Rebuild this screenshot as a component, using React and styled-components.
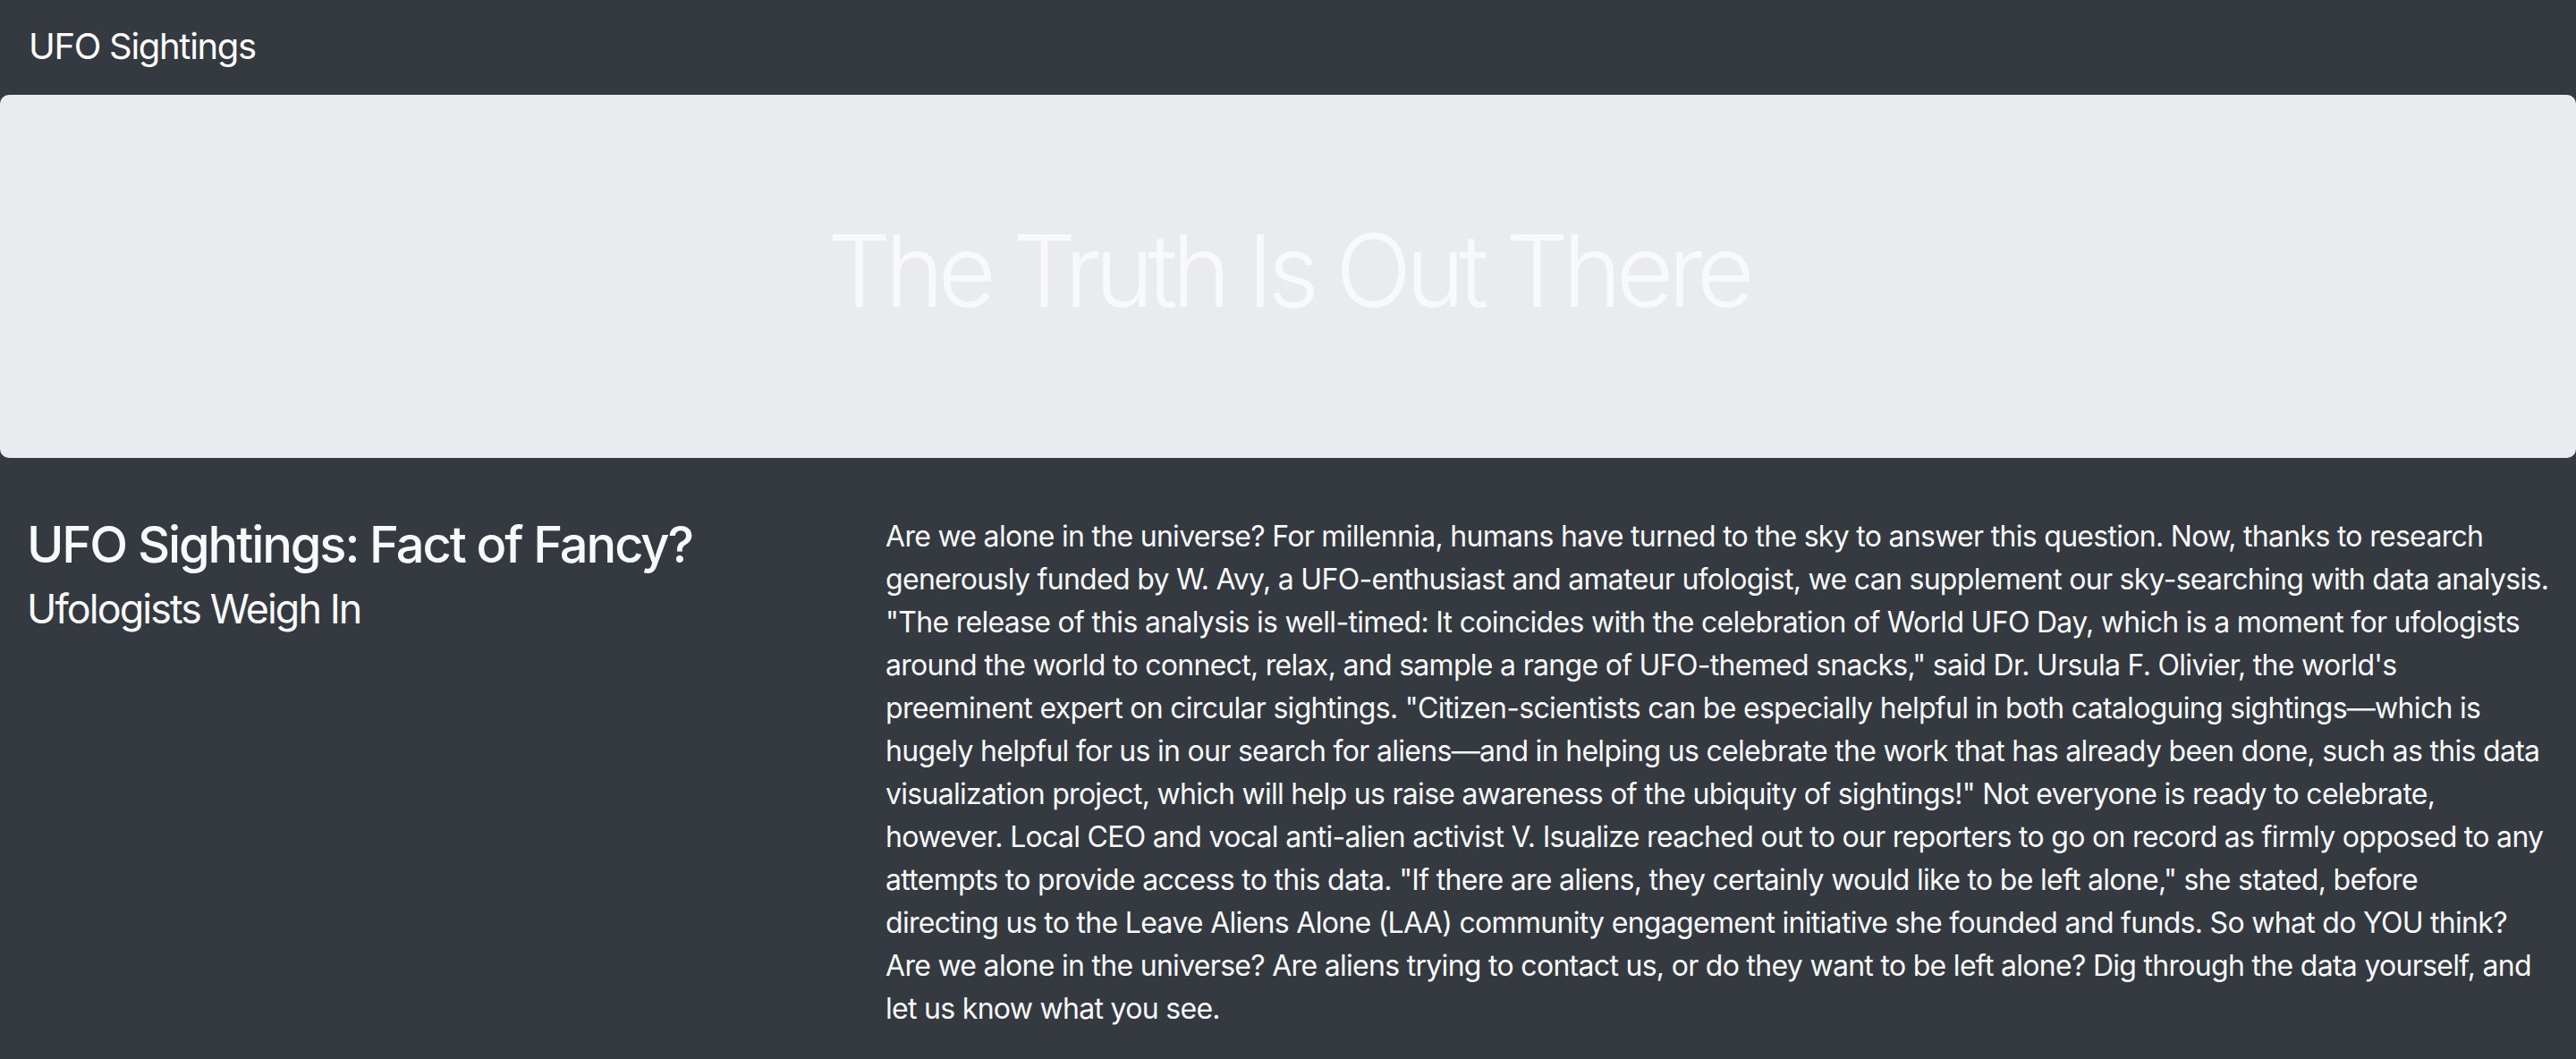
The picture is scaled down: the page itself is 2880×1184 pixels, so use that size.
import { Fragment } from "react";
import styled, { createGlobalStyle } from "styled-components";

const GlobalStyle = createGlobalStyle`
  html, body {
    margin: 0;
    padding: 0;
    background-color: #343a40;
  }
  body {
    font-family: Inter, "Noto Sans", "Liberation Sans", sans-serif;
    color: #f8f9fa;
    font-size: 32px;
    line-height: 1.5;
  }
  * {
    box-sizing: border-box;
  }
`;

export const Page = styled.div`
  min-height: 1184px;
  background-color: #343a40;
`;

export const Navbar = styled.nav`
  display: flex;
  align-items: flex-start;
  height: 106px;
  padding: 32px 32px 0;
  background-color: #343a40;
`;

export const Brand = styled.a`
  font-size: 40px;
  line-height: 40px;
  letter-spacing: -1.3px;
  color: #ffffff;
  text-decoration: none;
`;

export const Jumbotron = styled.header`
  background-color: #e9ecef;
  border-radius: 10px;
  padding: 129px 64px 127px;
  margin-bottom: 64px;
`;

export const Titulo = styled.h1`
  margin: 0 0 16px;
  font-size: 112px;
  font-weight: 300;
  line-height: 1.2;
  letter-spacing: -6.6px;
  text-align: center;
  color: #f8f9fa;
`;

export const Linha = styled.div`
  display: grid;
  grid-template-columns: 1fr 2fr;
`;

export const Coluna = styled.div`
  padding: 0 30px;
  min-width: 0;
`;

export const Cabecalho = styled.h3`
  margin: 0 0 16px;
  font-size: 56px;
  font-weight: 500;
  line-height: 1.2;
  letter-spacing: -2.1px;
  color: #f8f9fa;
`;

export const Subtitulo = styled.small`
  font-size: 80%;
  font-weight: 400;
  letter-spacing: -1.9px;
`;

export const Texto = styled.p`
  margin: 0 0 32px;
  font-size: 32px;
  line-height: 48px;
  letter-spacing: -0.7px;
  white-space: nowrap;
  color: #f8f9fa;
`;

// linhas como aparecem no layout original
const artigo = [
  "Are we alone in the universe? For millennia, humans have turned to the sky to answer this question. Now, thanks to research",
  "generously funded by W. Avy, a UFO-enthusiast and amateur ufologist, we can supplement our sky-searching with data analysis.",
  "\"The release of this analysis is well-timed: It coincides with the celebration of World UFO Day, which is a moment for ufologists",
  "around the world to connect, relax, and sample a range of UFO-themed snacks,\" said Dr. Ursula F. Olivier, the world's",
  "preeminent expert on circular sightings. \"Citizen-scientists can be especially helpful in both cataloguing sightings—which is",
  "hugely helpful for us in our search for aliens—and in helping us celebrate the work that has already been done, such as this data",
  "visualization project, which will help us raise awareness of the ubiquity of sightings!\" Not everyone is ready to celebrate,",
  "however. Local CEO and vocal anti-alien activist V. Isualize reached out to our reporters to go on record as firmly opposed to any",
  "attempts to provide access to this data. \"If there are aliens, they certainly would like to be left alone,\" she stated, before",
  "directing us to the Leave Aliens Alone (LAA) community engagement initiative she founded and funds. So what do YOU think?",
  "Are we alone in the universe? Are aliens trying to contact us, or do they want to be left alone? Dig through the data yourself, and",
  "let us know what you see.",
];

function App() {
  return (
    <Page>
      <GlobalStyle />
      <Navbar>
        <Brand href="#">UFO Sightings</Brand>
      </Navbar>
      <Jumbotron>
        <Titulo>The Truth Is Out There</Titulo>
      </Jumbotron>
      <Linha>
        <Coluna>
          <Cabecalho>
            UFO Sightings: Fact of Fancy?
            <br />
            <Subtitulo>Ufologists Weigh In</Subtitulo>
          </Cabecalho>
        </Coluna>
        <Coluna>
          <Texto>
            {artigo.map((linha, i) => (
              <Fragment key={i}>
                {linha}
                {i < artigo.length - 1 && <br />}
              </Fragment>
            ))}
          </Texto>
        </Coluna>
      </Linha>
    </Page>
  );
}

export default App;
